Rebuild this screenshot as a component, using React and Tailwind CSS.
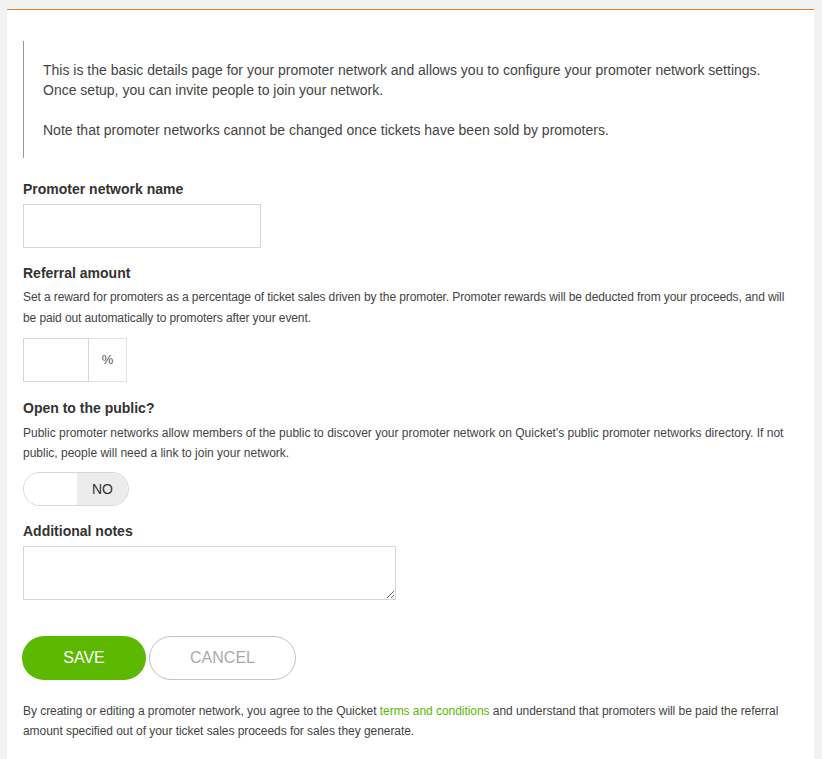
import React, { useState } from "react";

const font = { fontFamily: '"Liberation Sans", Arial, sans-serif' };

const App = () => {
  const [name, setName] = useState("");
  const [amount, setAmount] = useState("");
  const [isPublic, setIsPublic] = useState(false);
  const [notes, setNotes] = useState("");

  return (
    <div className="min-h-[759px] bg-[#f2f2f2] pt-[9px] pl-[7px] pr-[8px]" style={font}>
      <div className="min-h-[750px] bg-white border-t border-[#ee7d21] px-4 pt-[31px] text-[#444]">
        {/* Intro note */}
        <div className="border-l border-[#999] pl-[19px] pt-[19px] pb-[18px] text-[14px] leading-[20px]">
          <p>
            This is the basic details page for your promoter network and allows you to configure your promoter network settings.
            <br />
            Once setup, you can invite people to join your network.
          </p>
          <p className="mt-5">Note that promoter networks cannot be changed once tickets have been sold by promoters.</p>
        </div>

        {/* Name */}
        <label className="block mt-[21px] text-[14px] leading-[20px] font-bold text-[#333]">Promoter network name</label>
        <input
          type="text"
          value={name}
          onChange={(e) => setName(e.target.value)}
          className="block mt-[5px] w-[238px] h-[44px] border border-[#d6d6d6] px-2 text-[14px] outline-none"
        />

        {/* Referral amount */}
        <label className="block mt-[15px] text-[14px] leading-[20px] font-bold text-[#333]">Referral amount</label>
        <p className="mt-[4px] text-[12px] leading-[21px] tracking-[-0.1px]">
          Set a reward for promoters as a percentage of ticket sales driven by the promoter. Promoter rewards will be deducted from your proceeds, and will be paid out automatically to promoters after your event.
        </p>
        <div className="mt-[9px] flex w-[104px] h-[44px]">
          <input
            type="text"
            value={amount}
            onChange={(e) => setAmount(e.target.value)}
            className="w-[66px] h-full border border-[#d6d6d6] px-2 text-[14px] outline-none"
          />
          <span className="flex-1 flex items-center justify-center border border-l-0 border-[#e3e3e3] text-[13px] text-[#555]">%</span>
        </div>

        {/* Public */}
        <label className="block mt-[16px] text-[14px] leading-[20px] font-bold text-[#333]">Open to the public?</label>
        <p className="mt-[5px] text-[12px] leading-[20px]">
          Public promoter networks allow members of the public to discover your promoter network on Quicket's public promoter networks directory. If not public, people will need a link to join your network.
        </p>
        <button
          onClick={() => setIsPublic(!isPublic)}
          className="mt-[9px] flex w-[106px] h-[34px] rounded-full border border-[#d6d6d6] overflow-hidden text-[14px] text-[#333]"
        >
          <span className="w-[53px] h-full bg-white" />
          <span className="flex-1 h-full bg-[#ececec] flex items-center justify-center">{isPublic ? "YES" : "NO"}</span>
        </button>

        {/* Notes */}
        <label className="block mt-[15px] text-[14px] leading-[20px] font-bold text-[#333]">Additional notes</label>
        <textarea
          value={notes}
          onChange={(e) => setNotes(e.target.value)}
          className="block mt-[5px] w-[373px] h-[54px] border border-[#d6d6d6] px-2 py-1 text-[14px] outline-none"
        />

        {/* Actions */}
        <div className="mt-[36px] -ml-px flex gap-[3px]">
          <button className="w-[124px] h-[44px] rounded-full bg-[#5cb800] text-white text-[16px]">SAVE</button>
          <button className="w-[147px] h-[44px] rounded-full border border-[#c2c2c2] bg-white text-[#aaa] text-[16px]">CANCEL</button>
        </div>

        <p className="mt-[21px] text-[12px] leading-[20px] tracking-[-0.05px]">
          By creating or editing a promoter network, you agree to the Quicket{" "}
          <a href="#" className="text-[#5cb800]">terms and conditions</a> and understand that promoters will be paid the referral amount specified out of your ticket sales proceeds for sales they generate.
        </p>
      </div>
    </div>
  );
};

export default App;
